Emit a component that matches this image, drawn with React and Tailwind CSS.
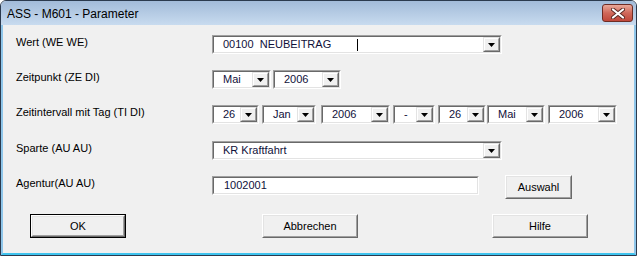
const FONT = { fontFamily: '"Liberation Sans", Arial, sans-serif' };

function Arrow() {
    return (
        <svg width="7" height="4" viewBox="0 0 7 4" className="block">
            <path d="M0 0h7L3.5 4z" fill="#000" />
        </svg>
    );
}

// sunken 3d box, classic windows look
function Sunken({ className = '', children }) {
    return (
        <div className={`border border-t-[#a0a0a0] border-l-[#a0a0a0] border-b-white border-r-white ${className}`}>
            <div className="h-full border border-t-[#696969] border-l-[#696969] border-b-[#e3e3e3] border-r-[#e3e3e3] bg-white flex items-center">
                {children}
            </div>
        </div>
    );
}

function Combo({ w, text, cursor }) {
    return (
        <Sunken className={`${w} h-[19px] flex-none`}>
            <span className="flex-1 min-w-0 pl-[9px] text-[11px] leading-[13px] text-[#10103a] whitespace-pre flex items-center">
                {text}
                {cursor && <span className="inline-block w-px h-[12px] bg-black ml-[26px]" />}
            </span>
            <div className="w-[17px] h-full flex-none border border-t-[#e3e3e3] border-l-[#e3e3e3] border-b-[#696969] border-r-[#696969]">
                <div className="h-full border border-t-white border-l-white border-b-[#a0a0a0] border-r-[#a0a0a0] bg-[#f0f0f0] flex items-center justify-center">
                    <Arrow />
                </div>
            </div>
        </Sunken>
    );
}

function Button({ w = 'w-[96px]', label, isDefault, className = '' }) {
    const inner = (
        <div className="h-full border border-t-white border-l-white border-b-[#696969] border-r-[#696969]">
            <div className="h-full border border-t-[#e3e3e3] border-l-[#e3e3e3] border-b-[#a0a0a0] border-r-[#a0a0a0] bg-[#f0f0f0] flex items-center justify-center text-[11px] text-black">
                {label}
            </div>
        </div>
    );
    return (
        <div className={`${w} h-[24px] flex-none ${isDefault ? 'border border-black' : ''} ${className}`}>
            {inner}
        </div>
    );
}

function Label({ children }) {
    return <div className="w-[196px] flex-none pt-[1px] text-[11px] leading-[13px] text-black">{children}</div>;
}

export default function App() {
    return (
        <div className="w-[637px] h-[256px] flex flex-col border border-[#2b3a4e] rounded-t-[6px] overflow-hidden bg-[#f0f0f0]" style={FONT}>
            <div className="h-[24px] flex-none flex items-center justify-between pl-[6px] pr-[3px] bg-gradient-to-b from-[#a2bbd9] to-[#c8dbef]">
                <span className="text-[12px] text-black pt-[1px]">ASS - M601 - Parameter</span>
                <div className="w-[31px] h-[18px] rounded-[3px] border border-[#6e2c24] bg-gradient-to-b from-[#e9a899] via-[#d0685a] to-[#c0473a] flex items-center justify-center">
                    <svg width="14" height="11" viewBox="0 0 14 11">
                        <path d="M2 1.5l10 8M12 1.5l-10 8" stroke="#5b2a24" strokeWidth="4" strokeLinecap="round" />
                        <path d="M2 1.5l10 8M12 1.5l-10 8" stroke="#fff" strokeWidth="2.2" strokeLinecap="round" />
                    </svg>
                </div>
            </div>
            <div className="flex-1 flex flex-col border-x-2 border-b-2 border-x-[#8fc6ea] border-b-[#3ec3ee] pl-[13px] pt-[10px]">
                <div className="h-[35px] flex items-start">
                    <Label>Wert (WE WE)</Label>
                    <Combo w="w-[290px]" text="00100  NEUBEITRAG" cursor />
                </div>
                <div className="h-[35px] flex items-start">
                    <Label>Zeitpunkt (ZE DI)</Label>
                    <Combo w="w-[59px]" text="Mai" />
                    <div className="ml-[2px]"><Combo w="w-[68px]" text="2006" /></div>
                </div>
                <div className="h-[36px] flex items-start">
                    <Label>Zeitintervall mit Tag (TI DI)</Label>
                    <Combo w="w-[47px]" text="26" />
                    <div className="ml-[3px]"><Combo w="w-[54px]" text="Jan" /></div>
                    <div className="ml-[5px]"><Combo w="w-[69px]" text="2006" /></div>
                    <div className="ml-[3px]"><Combo w="w-[42px]" text="-" /></div>
                    <div className="ml-[3px]"><Combo w="w-[48px]" text="26" /></div>
                    <div className="ml-[1px]"><Combo w="w-[58px]" text="Mai" /></div>
                    <div className="ml-[3px]"><Combo w="w-[69px]" text="2006" /></div>
                </div>
                <div className="h-[35px] flex items-start">
                    <Label>Sparte (AU AU)</Label>
                    <Combo w="w-[290px]" text="KR Kraftfahrt" />
                </div>
                <div className="h-[38px] flex items-start">
                    <Label>Agentur(AU AU)</Label>
                    <Sunken className="w-[267px] h-[19px] flex-none">
                        <span className="pl-[10px] text-[11px] leading-[13px] text-[#10103a]">1002001</span>
                    </Sunken>
                    <Button w="w-[67px]" label="Auswahl" className="ml-[26px] -mt-[1px]" />
                </div>
                <div className="flex items-start pl-[14px]">
                    <Button label="OK" isDefault />
                    <Button label="Abbrechen" className="ml-[136px]" />
                    <Button label="Hilfe" className="ml-[134px]" />
                </div>
            </div>
        </div>
    );
}
